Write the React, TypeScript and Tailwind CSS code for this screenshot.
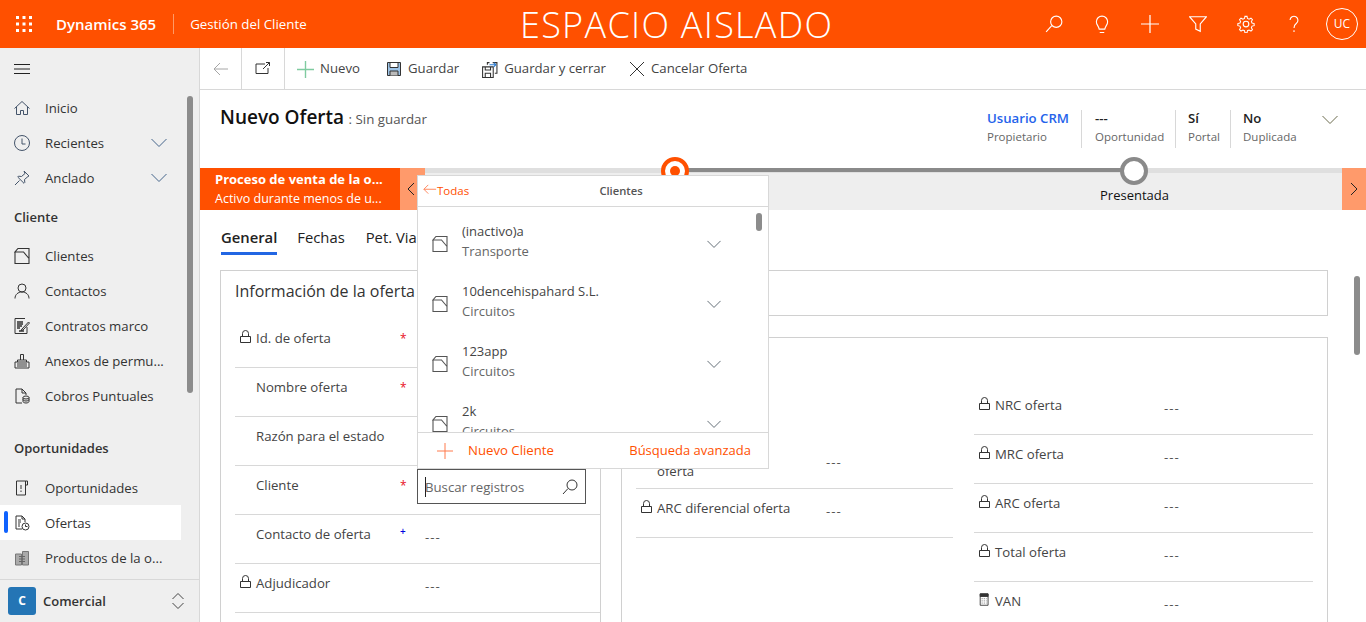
import React from "react";

const font = { fontFamily: '"Open Sans", "Noto Sans", sans-serif' };

function I({ s = 16, c = "currentColor", w = 1, children, className = "" }: { s?: number; c?: string; w?: number; children: React.ReactNode; className?: string }) {
  return (
    <svg width={s} height={s} viewBox="0 0 16 16" fill="none" stroke={c} strokeWidth={w} className={`shrink-0 ${className}`}>
      {children}
    </svg>
  );
}
const Chevron = ({ c = "#505b66", className = "", w = 16 }: { c?: string; className?: string; w?: number }) => (
  <svg width={w} height={(w * 10) / 16} viewBox="0 0 16 10" fill="none" stroke={c} strokeWidth="1" className={`shrink-0 ${className}`}>
    <path d="M.5 1 8 8.500 15.500 1" />
  </svg>
);
const Lock = () => (
  <svg width="14" height="14" viewBox="0 0 14 14" fill="none" stroke="#333" className="shrink-0">
    <path d="M1.500 6.500h10v6h-10z" />
    <path d="M3.500 6.500V3.500a3 3 0 0 1 6 0v3" />
  </svg>
);
const Account = ({ c = "#333" }: { c?: string }) => (
  <I s={16} c={c} w={1.100}>
    <path d="M1 4V15.500h14V.5H4L1 4h8.500L15 10.500" />
  </I>
);

function NavItem({ icon, label, chevron, active }: { icon: React.ReactNode; label: string; chevron?: boolean; active?: boolean }) {
  return (
    <div className={`relative flex h-[35px] w-[181px] items-center pl-[14px] pr-[14px] text-[13.2px] leading-[20px] text-[#333] ${active ? "bg-white" : ""}`}>
      {active && <span className="absolute left-[4px] top-[6px] h-[22px] w-[4px] rounded-sm bg-[#0f62fe]" />}
      <span className="flex w-[31px] shrink-0">{icon}</span>
      <span className="flex-1 whitespace-nowrap">{label}</span>
      {chevron && <Chevron c="#44658a" />}
    </div>
  );
}

function Sidebar() {
  return (
    <aside className="flex h-full w-[200px] shrink-0 flex-col border-r border-[#d8d8d8] bg-[#efefef]">
      <div className="relative min-h-0 flex-1 overflow-hidden">
        <div className="flex h-[42px] items-center pl-[14px]">
          <svg width="16" height="12" viewBox="0 0 16 12" stroke="#222" strokeWidth="1">
            <path d="M0 1.500h16M0 6h16M0 10.500h16" />
          </svg>
        </div>
        <div>
          <NavItem label="Inicio" icon={<I c="#44546a"><path d="M.5 8.500 8 1.500l7.500 7" /><path d="M2.500 7v7.500h4v-4h3v4h4V7" /></I>} />
          <NavItem label="Recientes" chevron icon={<I c="#44546a"><circle cx="8" cy="8" r="7.500" /><path d="M8 3.500V9h3.500" /></I>} />
          <NavItem label="Anclado" chevron icon={<I c="#44546a"><path d="M10 1l5 5-1 .5-3.500 3 .3 3-.8.8-6.300-6.300.8-.8 3 .3 3.500-3zM5.500 10.500 1 15" /></I>} />
        </div>
        <div className="flex h-[35px] items-end pb-[3px] pl-[14px] text-[13px] font-semibold text-[#333]">Cliente</div>
        <div className="pt-[8px]">
          <NavItem label="Clientes" icon={<Account />} />
          <NavItem label="Contactos" icon={<I c="#333"><circle cx="8" cy="5" r="4" /><path d="M1 15.500c0-4 3-6.500 7-6.500s7 2.500 7 6.500" /></I>} />
          <NavItem label="Contratos marco" icon={<I c="#333"><path d="M13 9v6.500H1V.5h10" /><path d="M3 4h6M3 6h6M3 8h5M3 10h3M5 13h5" strokeWidth="1.300" /><path d="M8 11l6.500-7 1 1-6.500 7-2 .5z" /></I>} />
          <NavItem label="Anexos de permu..." icon={<I c="#333"><path d="M1 9h14v6H1zM3.500 9V7h9v2M6.500 7V1.500h3V7" /><path d="M3 11h10M3 13h10" /></I>} />
          <NavItem label="Cobros Puntuales" icon={<I c="#333"><path d="M8 15H2V1h6l4 4v2M8 1v4h4" /><ellipse cx="12" cy="9.500" rx="3" ry="1.500" /><path d="M9 9.500v4c0 .8 1.300 1.500 3 1.500s3-.7 3-1.500v-4M9 11.500c0 .8 1.300 1.500 3 1.500s3-.7 3-1.500" /></I>} />
        </div>
        <div className="flex h-[46px] items-end pb-[1px] pl-[14px] text-[13px] font-semibold text-[#333]">Oportunidades</div>
        <div className="pt-[11px]">
          <NavItem label="Oportunidades" icon={<I c="#333"><path d="M2.500 1h9v14h-9zM11.500 1h2v4h-2" /><path d="M7 5v4M7 10.500v1.500" /></I>} />
          <NavItem active label="Ofertas" icon={<I c="#333"><path d="M8 14H2V1h6l3 3v3M8 1v3h3M4 5h3M4 7h3M4 9h2M4 11h2" /><circle cx="11.500" cy="11.500" r="3.500" /><path d="M11.500 9.500v2h2" /></I>} />
          <NavItem label="Productos de la o..." icon={<I c="#777"><path d="M1.500 4h6v11h-6zM8.500 1.500h6V15h-6z" fill="#aaa" /><path d="M5 6.500h6M5 9h6M5 11.500h6" stroke="#666" /></I>} />
        </div>
        <div className="absolute right-[6px] top-[48px] h-[297px] w-[6px] rounded bg-[#8c8c8c]" />
      </div>
      <div className="flex h-[43px] shrink-0 items-center border-t border-[#d8d8d8] pl-[8px] pr-[14px]">
        <span className="flex h-[28px] w-[28px] items-center justify-center rounded-[3px] bg-[#2475b5] text-[12px] font-bold text-white">C</span>
        <span className="ml-[7px] flex-1 pt-[1px] text-[13px] font-semibold text-[#333]">Comercial</span>
        <svg width="14" height="18" viewBox="0 0 14 18" fill="none" stroke="#444"><path d="M1.500 7 7 1.500 12.500 7M1.500 11 7 16.500 12.500 11" /></svg>
      </div>
    </aside>
  );
}

function TopBar() {
  return (
    <header className="relative flex h-[48px] shrink-0 items-center bg-[#ff5000] text-white">
      <div className="flex w-[48px] justify-center">
        <svg width="16" height="16" viewBox="0 0 16 16" fill="#fff">
          {[0, 6.500, 13].flatMap((y) => [0, 6.500, 13].map((x) => <rect key={`${x}-${y}`} x={x} y={y} width="3" height="3" />))}
        </svg>
      </div>
      <span className="ml-[8px] text-[15px] font-semibold">Dynamics 365</span>
      <span className="ml-[17px] h-[20px] w-px bg-[#ff9a66]" />
      <span className="ml-[16px] pt-[2px] text-[13.300px]">Gestión del Cliente</span>
      <div className="absolute left-[520px] top-[1px] text-[36px] font-light leading-[48px] tracking-[1.300px]">ESPACIO AISLADO</div>
      <div className="ml-auto flex items-center pr-[8px]">
        <span className="flex w-[48px] justify-center"><I s={18} c="#fff"><path d="M1 15l5-5.500" /><circle cx="10" cy="6" r="5" /></I></span>
        <span className="flex w-[48px] justify-center"><I s={18} c="#fff"><path d="M5.500 12.500C5 9.500 3 9 3 6a5 5 0 0 1 10 0c0 3-2 3.500-2.500 6.500zM6 15.500h4" /></I></span>
        <span className="flex w-[48px] justify-center"><I s={18} c="#fff" w={1.100}><path d="M8 0v16M0 8h16" /></I></span>
        <span className="flex w-[48px] justify-center"><I s={18} c="#fff"><path d="M.5 1.500h15L10 8v6.500l-4-2V8z" /></I></span>
        <span className="flex w-[48px] justify-center"><I s={18} c="#fff"><circle cx="8" cy="8" r="2.500" /><path d="M7 .8h2l.4 2 1.500.7 1.800-1 1.400 1.400-1 1.800.6 1.500 2 .4v2l-2 .4-.6 1.500 1 1.800-1.400 1.400-1.800-1-1.500.6-.4 2H7l-.4-2-1.500-.6-1.800 1-1.400-1.400 1-1.800-.6-1.500-2-.4v-2l2-.4.6-1.500-1-1.800L3.300 2.500l1.800 1 1.500-.7z" transform="scale(.94) translate(.5 .5)" /></I></span>
        <span className="flex w-[48px] justify-center"><I s={18} c="#fff"><path d="M4.500 4.500a3.500 3.500 0 1 1 5.500 3C8.500 8.500 8 9.500 8 11.500M8 13.500V15" /></I></span>
        <span className="ml-[8px] flex h-[32px] w-[32px] items-center justify-center rounded-full border border-white text-[12px]">UC</span>
      </div>
    </header>
  );
}

function CmdBtn({ icon, label, className = "" }: { icon: React.ReactNode; label: string; className?: string }) {
  return (
    <div className={`flex h-full items-center pt-[1px] text-[13.200px] text-[#444] ${className}`}>
      <span className="mr-[6px] flex">{icon}</span>
      {label}
    </div>
  );
}

function CommandBar() {
  return (
    <div className="flex h-[42px] shrink-0 items-center border-b border-[#d8d8d8] bg-white">
      <div className="flex h-full w-[42px] items-center justify-center border-r border-[#d8d8d8]">
        <I c="#a6a6a6"><path d="M15 8H1M7 2 1 8l6 6" /></I>
      </div>
      <div className="flex h-full w-[43px] items-center justify-center border-r border-[#d8d8d8]">
        <I c="#333"><path d="M10 3H1v9.500h12V7M8 8l6.500-6.500M11 1.500h3.500V5" /></I>
      </div>
      <div className="flex h-full items-center pl-[12px]">
        <CmdBtn label="Nuevo" icon={<I s={17} c="#7fcba0" w={1.300}><path d="M8 0v16M0 8h16" /></I>} />
        <CmdBtn className="ml-[26px]" label="Guardar" icon={<I c="#333"><path d="M1.500 1.500h13v13h-13z" fill="#9dc3e6" /><path d="M4 1.500h8v5H4z" fill="#fff" /><path d="M4 14.500V10h8v4.500" fill="#bbb" /></I>} />
        <CmdBtn className="ml-[22px]" label="Guardar y cerrar" icon={<I s={17} c="#333"><path d="M1.500 5.500h10v10h-10zM4 5.500v3h5v-3M4 15.500V11.500h5v4" /><path d="M6 3.500V1.500h2M11 1.500h4v10h-2" /><path d="M8 3.500h6M12 1.500l2 2-2 2" stroke="#2b7cd3" /></I>} />
        <CmdBtn className="ml-[23px]" label="Cancelar Oferta" icon={<I c="#333"><path d="M1 1l14 14M15 1 1 15" /></I>} />
      </div>
    </div>
  );
}

function HeaderField({ value, label, link, w }: { value: string; label: string; link?: boolean; w: string }) {
  return (
    <div className={`-mt-[1px] flex h-[37px] flex-col justify-between ${w} leading-[18px]`}>
      <span className={`text-[13.200px] ${link ? "font-semibold text-[#2563eb]" : "font-semibold text-[#222]"}`}>{value}</span>
      <span className="text-[11.500px] text-[#666]">{label}</span>
    </div>
  );
}

function FormHeader() {
  return (
    <div className="flex h-[78px] shrink-0 bg-white pl-[20px] pr-[28px]">
      <div className="flex-1 pt-[13px]">
        <span className="text-[19px] font-semibold text-[#111]">Nuevo Oferta</span>
        <span className="ml-[1px] text-[13.300px] text-[#555]"> : Sin guardar</span>
      </div>
      <div className="flex items-start pt-[20px]">
        <HeaderField w="w-[94px]" link value="Usuario CRM" label="Propietario" />
        <div className="h-[38px] w-px bg-[#d8d8d8]" />
        <HeaderField w="w-[93px] pl-[13px]" value="---" label="Oportunidad" />
        <div className="h-[38px] w-px bg-[#d8d8d8]" />
        <HeaderField w="w-[54px] pl-[12px]" value="Sí" label="Portal" />
        <div className="h-[38px] w-px bg-[#d8d8d8]" />
        <HeaderField w="w-[91px] pl-[12px]" value="No" label="Duplicada" />
        <Chevron c="#6b6b4d" className="mt-[5px]" />
      </div>
    </div>
  );
}

function ProcessBar() {
  return (
    <div className="flex h-[42px] shrink-0 bg-[#eeeeee]">
      <div className="flex w-[200px] shrink-0 flex-col justify-center whitespace-nowrap bg-[#ff5000] pl-[15px] leading-[19px] text-white">
        <span className="text-[13px] font-bold">Proceso de venta de la o...</span>
        <span className="text-[12.500px]">Activo durante menos de u...</span>
      </div>
      <div className="flex w-[25px] shrink-0 items-center bg-[#ff9a6b] pl-[7px]">
        <svg width="8" height="14" viewBox="0 0 8 14" fill="none" stroke="#222"><path d="M7 1 1 7l6 6" /></svg>
      </div>
      <div className="relative flex-1">
        <div className="absolute inset-x-0 top-0 h-[5px] bg-[#dfdfdf]" />
        <div className="absolute left-[240px] top-0 h-[4px] w-[470px] bg-[#8a8a8a]" />
        <div className="absolute left-[236px] top-[-11px] flex h-[28px] w-[28px] items-center justify-center rounded-full border-[4px] border-[#ff5000] bg-white">
          <span className="h-[10px] w-[10px] rounded-full bg-[#ff5000]" />
        </div>
        <div className="absolute left-[695px] top-[-11px] h-[28px] w-[28px] rounded-full border-[4px] border-[#8a8a8a] bg-white" />
        <div className="absolute left-[675px] top-[18px] w-[68px] text-center text-[13px] leading-[18px] text-[#111]">Presentada</div>
      </div>
      <div className="flex w-[24px] shrink-0 items-center justify-center bg-[#ff9a6b]">
        <svg width="8" height="14" viewBox="0 0 8 14" fill="none" stroke="#222"><path d="m1 1 6 6-6 6" /></svg>
      </div>
    </div>
  );
}

const Dashes = () => <span className="tracking-[1px] text-[#555]">---</span>;

function Row({ label, req, lock, calc, value }: { label: React.ReactNode; req?: "r" | "b"; lock?: boolean; calc?: boolean; value?: React.ReactNode }) {
  return (
    <div className="relative flex h-[49px] border-b border-[#d8d8d8] text-[13.200px] text-[#444]">
      <div className="flex w-[21px] shrink-0 pl-[4px] pt-[11px]">
        {lock && <Lock />}
        {calc && <I s={14} c="#333"><path d="M2.500 1h9v13h-9z" /><path d="M2.500 1h9v3h-9z" fill="#333" /><path d="M4 6.500h6M4 9h6M4 11.500h6" stroke="#888" strokeDasharray="1.500 1" /></I>}
      </div>
      <div className="w-[169px] shrink-0 pt-[9px] leading-[20px]">{label}</div>
      <div className="flex-1 pt-[12px] leading-[20px]">{value}</div>
      {req && <span className={`absolute left-[165px] ${req === "r" ? "top-[13px] text-[12px] leading-[14px] text-[#e81123]" : "top-[9px] text-[10px] font-semibold leading-[14px] text-[#0000e0]"}`}>{req === "r" ? "*" : "+"}</span>}
    </div>
  );
}

function Tabs() {
  return (
    <div className="flex h-[60px] shrink-0 pl-[21px] pt-[17px] text-[14.800px] text-[#222]">
      <div className="mr-[20px] h-[28px] border-b-[3px] border-[#2266e3] font-semibold leading-[20px]">General</div>
      <div className="mr-[21px] leading-[20px]">Fechas</div>
      <div className="leading-[20px]">Pet. Viabilidad</div>
    </div>
  );
}

function FormBody() {
  return (
    <div className="relative min-h-0 flex-1 overflow-hidden bg-white">
      <Tabs />
      <div className="flex gap-[20px] pl-[20px] pr-[38px]">
        <section className="h-[400px] w-[381px] shrink-0 border border-[#d0d0d0] px-[14px]">
          <h2 className="pt-[8px] text-[16px] leading-[24px] text-[#333]">Información de la oferta</h2>
          <div className="-mr-[14px] pt-[16px]">
            <Row lock label="Id. de oferta" req="r" />
            <Row label="Nombre oferta" req="r" />
            <Row label="Razón para el estado" />
            <Row label="Cliente" req="r" value={
              <div className="-ml-[8px] -mt-[9px] flex h-[35px] w-[169px] items-center border border-[#555] pl-[7px] pr-[7px] text-[#666]">
                <span className="h-[20px] w-px shrink-0 bg-[#222]" />
                <span className="-ml-px flex-1 whitespace-nowrap">Buscar registros</span>
                <I s={16} c="#333"><path d="M1 15l5-5.500" /><circle cx="10" cy="6" r="5" /></I>
              </div>
            } />
            <Row label="Contacto de oferta" req="b" value={<Dashes />} />
            <Row lock label="Adjudicador" value={<Dashes />} />
          </div>
        </section>
        <div className="min-w-0 flex-1">
          <div className="h-[46px] border border-[#d0d0d0]" />
          <section className="mt-[21px] h-[340px] border border-[#d0d0d0] px-[14px]">
            <div className="flex gap-[21px]">
              <div className="w-[317px] shrink-0 pt-[102px]">
                <Row label={<span className="block pt-[12px]">oferta</span>} value={<Dashes />} />
                <Row lock label="ARC diferencial oferta" value={<Dashes />} />
              </div>
              <div className="min-w-0 flex-1 pt-[48px]">
                {["NRC oferta", "MRC oferta", "ARC oferta", "Total oferta"].map((l) => (
                  <Row key={l} lock label={l} value={<Dashes />} />
                ))}
                <Row calc label="VAN" value={<Dashes />} />
              </div>
            </div>
          </section>
        </div>
      </div>
      <div className="absolute right-[6px] top-[66px] h-[79px] w-[6px] rounded bg-[#8c8c8c]" />
    </div>
  );
}

function LookupItem({ a, b }: { a: string; b: string }) {
  return (
    <div className="flex h-[60px] shrink-0 items-center pl-[14px] pr-[47px] text-[13px]">
      <Account c="#555" />
      <div className="-mt-[6px] ml-[14px] flex-1 leading-[20px]">
        <div className="text-[#444]">{a}</div>
        <div className="text-[#666]">{b}</div>
      </div>
      <Chevron c="#505b66" w={14} />
    </div>
  );
}

function Lookup() {
  return (
    <div className="absolute left-[417px] top-[175px] flex h-[294px] w-[352px] flex-col border border-[#d8d8d8] bg-white">
      <div className="relative flex h-[31px] shrink-0 items-center justify-center border-b border-[#d8d8d8] pl-[56px]">
        <span className="absolute left-[5px] top-[7px] flex items-center text-[11.500px] leading-[16px] text-[#ff5000]">
          <I s={14} c="#ff7a4d"><path d="M15 6H1M6 1 1 6l5 5" /></I>
          Todas
        </span>
        <span className="text-[11.200px] font-semibold text-[#555]">Clientes</span>
      </div>
      <div className="relative flex min-h-0 flex-1 flex-col overflow-hidden">
        <div className="mt-[7px] flex flex-col">
          <LookupItem a="(inactivo)a" b="Transporte" />
          <LookupItem a="10dencehispahard S.L." b="Circuitos" />
          <LookupItem a="123app" b="Circuitos" />
          <LookupItem a="2k" b="Circuitos" />
        </div>
        <span className="absolute right-[6px] top-[6px] h-[18px] w-[6px] rounded bg-[#8c8c8c]" />
      </div>
      <div className="flex h-[36px] shrink-0 items-center border-t border-[#d8d8d8] pl-[19px] pr-[17px] text-[13.200px] text-[#ff5000]">
        <I s={16} c="#ff7a4d"><path d="M8 0v16M0 8h16" /></I>
        <span className="ml-[15px] flex-1">Nuevo Cliente</span>
        <span className="text-[13px]">Búsqueda avanzada</span>
      </div>
    </div>
  );
}

export default function App() {
  return (
    <div style={font} className="relative flex h-[622px] w-[1366px] flex-col overflow-hidden bg-white">
      <TopBar />
      <div className="flex min-h-0 flex-1">
        <Sidebar />
        <main className="flex min-w-0 flex-1 flex-col">
          <CommandBar />
          <FormHeader />
          <ProcessBar />
          <FormBody />
        </main>
      </div>
      <Lookup />
    </div>
  );
}
